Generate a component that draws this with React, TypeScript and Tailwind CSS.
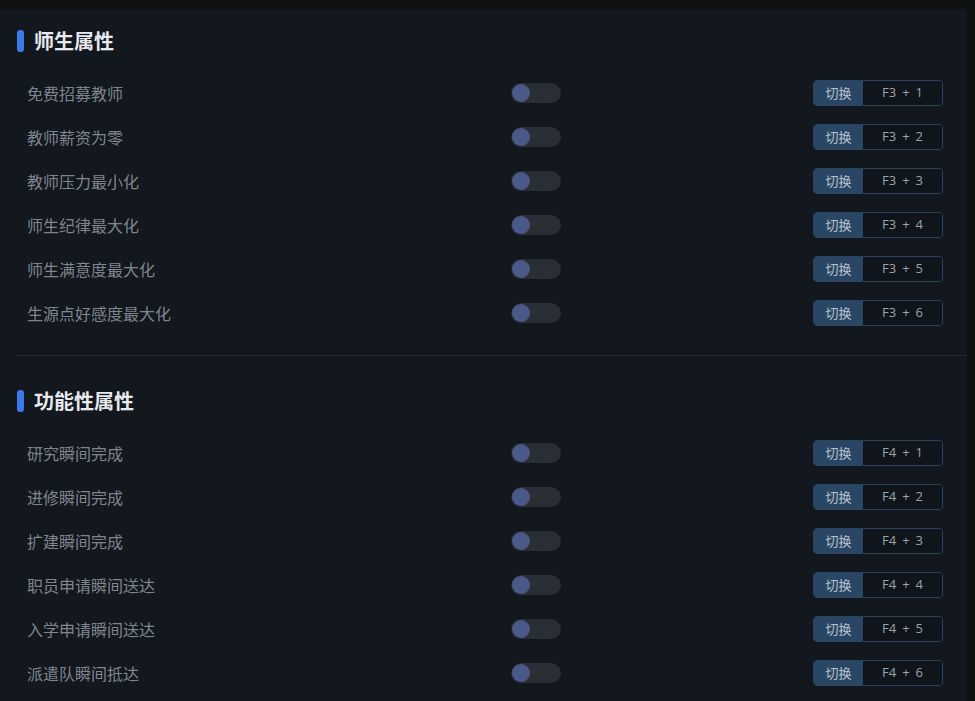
const sections = [
  {
    title: "师生属性",
    key: "F3",
    items: ["免费招募教师", "教师薪资为零", "教师压力最小化", "师生纪律最大化", "师生满意度最大化", "生源点好感度最大化"],
  },
  {
    title: "功能性属性",
    key: "F4",
    items: ["研究瞬间完成", "进修瞬间完成", "扩建瞬间完成", "职员申请瞬间送达", "入学申请瞬间送达", "派遣队瞬间抵达"],
  },
];

function Toggle() {
  return (
    <div className="flex h-[20px] w-[50px] items-center rounded-full bg-[#2a2e35] px-[1px]">
      <div className="h-[18px] w-[18px] rounded-full bg-[#4a5987]" />
    </div>
  );
}

function Hotkey({ k, n }: { k: string; n: number }) {
  return (
    <div className="flex h-[26px] w-[130px] overflow-hidden rounded-[4px] border border-[#2a4563] text-[13px]">
      <div className="flex w-[49px] items-center justify-center bg-[#294664] text-[#b9c3cf]">切换</div>
      <div
        className="flex flex-1 items-center justify-center gap-[6px] bg-[#10151c] text-[#9aa3ad]"
        style={{ fontFamily: '"Open Sans", sans-serif' }}
      >
        <span>{k}</span>
        <span>+</span>
        <span>{n}</span>
      </div>
    </div>
  );
}

export default function App() {
  return (
    <div
      className="h-[701px] w-[975px] overflow-hidden bg-[#0f1011] pt-[9px]"
      style={{ fontFamily: '"Noto Sans CJK SC", "Noto Sans", sans-serif' }}
    >
      <div className="h-full w-[967px] bg-[#13171e] pt-[18px]">
        {sections.map((s, i) => (
          <div key={s.title}>
            {i > 0 && <div className="ml-4 mb-[31px] mt-[20px] h-px bg-[#252a32]" />}
            <div className="flex h-[28px] items-center gap-[10px] pl-[17px]">
              <div className="h-[22px] w-[7px] rounded-[3px] bg-[#3b7ae8]" />
              <h2 className="text-[20px] font-bold text-[#e6e9ee]">{s.title}</h2>
            </div>
            <div className="mt-4">
              {s.items.map((label, j) => (
                <div key={label} className="flex h-[44px] items-center pl-[27px] pr-[24px]">
                  <span className="w-[484px] text-[16px] text-[#7f858e]">{label}</span>
                  <Toggle />
                  <div className="ml-auto">
                    <Hotkey k={s.key} n={j + 1} />
                  </div>
                </div>
              ))}
            </div>
          </div>
        ))}
      </div>
    </div>
  );
}
